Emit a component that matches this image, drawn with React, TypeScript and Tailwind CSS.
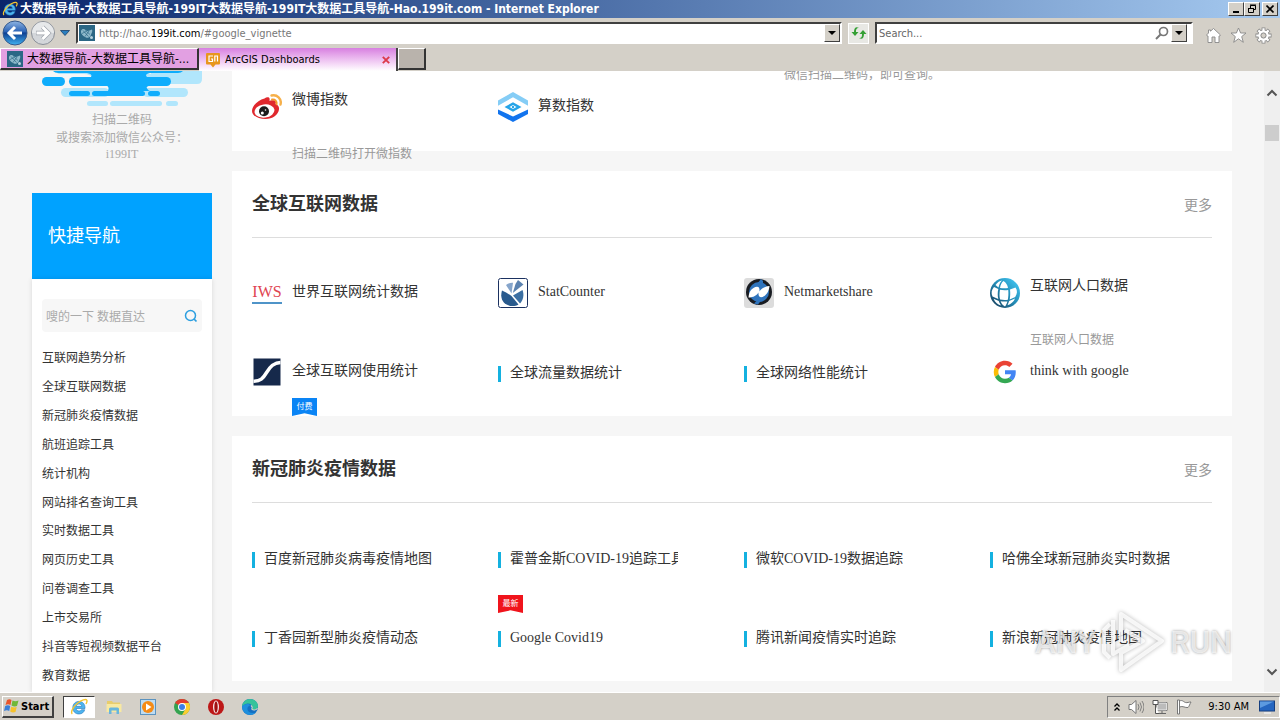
import type { ReactNode } from "react";

type Tag = { text: string; tone: "blue" | "red" };
type Item = { title?: string; icon?: ReactNode; sub?: string; tag?: Tag; high?: boolean };

const ui = "font-['DejaVu_Sans_Condensed','Noto_Sans_CJK_SC',sans-serif]";
const raised = "border border-t-white border-l-white border-r-[#404040] border-b-[#404040] bg-[#d4d0c8]";
const sunken = "border border-t-[#404040] border-l-[#404040] border-r-white border-b-white";

function IeLogo({ className }: { className: string }) {
  return (
    <svg viewBox="0 0 18 18" className={className} aria-hidden="true">
      <path d="M15 10.500H6.200c.1 1.600 1.200 2.500 2.800 2.500 1.200 0 2-.5 2.400-1.300h3.300C14 14.300 12 16 9 16c-3.700 0-6.200-2.500-6.200-6.300S5.400 3.400 9 3.400s6.300 2.600 6 7.100zM6.300 8.300h5.400C11.500 6.900 10.500 6 9 6S6.500 6.900 6.300 8.300z" fill="#4db4ee" stroke="#2277bd" strokeWidth=".6" />
      <path d="M2.300 15.800C.3 14.500 3 8.800 7.500 5.200 11.500 2 16 .6 16.800 2.200c.5.900.1 2.200-.8 3.800" fill="none" stroke="#f4c430" strokeWidth="1.400" />
    </svg>
  );
}

function SiteIcon() {
  return (
    <svg viewBox="0 0 16 16" className="size-4 shrink-0" aria-hidden="true">
      <rect width="16" height="16" fill="#2b6785" />
      <path d="M2 6c1-2.500 3-2.500 4.500-1S10 6 13 4.500c.8 2-.2 3-.7 4.500-.8 3-2.800 4.500-5.300 3.500S1.500 9 2 6z" fill="#8fbacb" />
      <path d="M4 5.500l5.500 6M6.500 5.500l4.500 4M10 6l-4 5.500M3 8.500l4-2" stroke="#2b6785" strokeWidth=".7" />
      <circle cx="12.500" cy="12.500" r="1.500" fill="#b7d3de" />
    </svg>
  );
}

function WeiboIcon() {
  return (
    <svg viewBox="0 0 30 30" className="size-[30px]" aria-hidden="true">
      <path d="M12.500 6.500c2-1.600 4.800-1.500 5.100.2.200.8-.2 2.200-.2 2.200s5.600-1.800 6.400.8c.3 1-.3 2.300-.3 2.300 2.500.8 3.800 2.600 3.500 5.200-.5 5.500-6.500 9.800-13.500 9.800S0 24 0 19C0 14 6 8 12.500 6.500z" fill="#e0282d" />
      <ellipse cx="12.500" cy="19" rx="10" ry="6.600" fill="#fff" transform="rotate(-8 12.500 19)" />
      <circle cx="12" cy="19.300" r="5" fill="#1c1c1c" />
      <circle cx="10.300" cy="21" r="1.500" fill="#fff" />
      <circle cx="13.500" cy="18" r=".8" fill="#fff" />
      <path d="M20 7.500c3-.6 5.300 1.800 4.600 4.800" fill="none" stroke="#f39a2b" strokeWidth="1.900" strokeLinecap="round" />
      <path d="M19.500 3.500C25 2 30 6.800 28.500 12.500" fill="none" stroke="#f6b04a" strokeWidth="2.400" strokeLinecap="round" />
    </svg>
  );
}

function CountIcon() {
  return (
    <svg viewBox="0 0 30 30" className="size-[30px]" aria-hidden="true">
      <path d="M0 8.500L15 0l15 8.500v5.200L15 5.200 0 13.700z" fill="#85cdf6" />
      <path d="M0 17.500l15 7 15-7v4.500l-15 8-15-8z" fill="#1274ee" />
      <path d="M6.500 15L15 10.300l8.500 4.700-8.500 4.700z" fill="#25a4e8" />
      <path d="M11.500 15l3.500-2 3.500 2-3.500 2z" fill="#fff" />
      <circle cx="15" cy="15" r="1.200" fill="#25a4e8" />
    </svg>
  );
}

function IwsIcon() {
  return (
    <span className="flex size-[30px] flex-col items-center justify-center font-['Liberation_Serif',serif] text-base leading-5 text-[#df4450]">
      <span className="border-b-2 border-[#4f94c8]">IWS</span>
    </span>
  );
}

function StatIcon() {
  return (
    <svg viewBox="0 0 30 30" className="size-[30px]" aria-hidden="true">
      <rect x=".5" y=".5" width="29" height="29" rx="2" fill="#fff" stroke="#1b3160" />
      <path d="M4 12.500Q9 14.500 13.500 18l7 8.500C13 31 0 25.500 4 12.500z" fill="#295a8d" />
      <path d="M15 17.500l9.500-5.500c2 5.500.5 10-2.500 13.500z" fill="#3b6fa3" />
      <path d="M13.500 15.500L8 7c2-1.800 4.500-2.500 7-2.300z" fill="#86a5cb" />
      <path d="M14.800 15l2.700-9 2.500-4 5.500 4.500z" fill="#5b82b0" />
    </svg>
  );
}

function NetIcon() {
  return (
    <svg viewBox="0 0 30 30" className="size-[30px]" aria-hidden="true">
      <rect width="30" height="30" rx="3" fill="#dcdcdc" />
      <circle cx="15" cy="14" r="13" fill="#191c22" />
      <circle cx="15" cy="14" r="10" fill="#2f74bd" />
      <path d="M17 1l2 2v3h-6zM10 25.500l3-3h4l-3 4z" fill="#2f74bd" />
      <path d="M4.500 19.500C5 13 8.500 9.300 13 8.800c2.300 0 2.600 2 2.600 4.700 1.400-2.700 5-5 9.900-5.500-.5 6-4 10.700-8.500 11.200-2.300 0-2.600-2-2.600-4.700-1.400 2.700-5 5-9.900 5z" fill="#fff" />
    </svg>
  );
}

function GlobeIcon() {
  return (
    <svg viewBox="0 0 30 30" className="size-[30px]" aria-hidden="true">
      <defs>
        <linearGradient id="globe" x1="1" y1="0" x2="0" y2="1">
          <stop offset="0" stopColor="#47d1ff" />
          <stop offset=".5" stopColor="#238bb5" />
          <stop offset="1" stopColor="#17334e" />
        </linearGradient>
      </defs>
      <circle cx="15" cy="15" r="15" fill="url(#globe)" />
      <g fill="#fff">
        <path d="M5.500 7C7 4.700 9.500 3 12 2.500 10 4.500 9 7 8.500 9.500zM13.500 3c2.500 1.500 4 4 4.500 7-2.600.5-5.500.4-8 0 .5-3 1.500-5.500 3.500-7z" />
        <path d="M4 9l4.300 2c-.8 3.500-.7 7 0 10L2.500 18.500C.9 15 1.500 12 4 9zM10 11.800c2.500.5 5.600.5 8.200.2.400 3.500.2 6.500-.3 9.800-2.700.4-5.300.3-7.800-.2-.8-3.200-.7-6.500-.1-9.800zM20 11.600l5.500-2.200c2.200 3 1.800 6.300-.3 9.500l-5.500 2.500c.6-3.400.7-6.500.3-9.800z" />
        <path d="M3.500 20.800l5.300 2.200c.5 1.500 1.200 3.200 2.500 4.500C8 27 5 24.500 3.500 20.800zM10.600 23.300c2.300.4 4.600.4 6.800.1-.6 2.100-1.300 3.800-2.400 5-2-.8-3.500-2.700-4.400-5.100zM19.200 23l5.800-2.500c-1 3-4 5.700-7.500 6.700z" />
      </g>
    </svg>
  );
}

function SIcon() {
  return (
    <svg viewBox="0 0 30 30" className="size-[30px]" aria-hidden="true">
      <rect x="1.500" y="1.500" width="27" height="27" fill="#16294b" />
      <path d="M1.500 24.200c7-.2 9.500-2.500 13-8.500s7-10 14-10.200" fill="none" stroke="#fff" strokeWidth="3.600" />
    </svg>
  );
}

function GoogleIcon() {
  return (
    <svg viewBox="-8 -8 64 64" className="size-[30px]" aria-hidden="true">
      <path fill="#EA4335" d="M24 9.500c3.540 0 6.710 1.220 9.210 3.600l6.850-6.850C35.900 2.380 30.470 0 24 0 14.620 0 6.510 5.380 2.560 13.220l7.980 6.190C12.430 13.720 17.740 9.500 24 9.500z" />
      <path fill="#4285F4" d="M46.980 24.550c0-1.570-.15-3.090-.38-4.550H24v9.020h12.940c-.58 2.960-2.260 5.480-4.780 7.180l7.730 6c4.510-4.180 7.090-10.360 7.090-17.650z" />
      <path fill="#FBBC05" d="M10.530 28.590c-.48-1.450-.76-2.990-.76-4.590s.27-3.140.76-4.590l-7.980-6.190C.92 16.460 0 20.120 0 24c0 3.880.92 7.540 2.560 10.780l7.970-6.190z" />
      <path fill="#34A853" d="M24 48c6.480 0 11.930-2.130 15.890-5.810l-7.730-6c-2.150 1.450-4.920 2.300-8.160 2.300-6.260 0-11.570-4.220-13.470-9.910l-7.980 6.190C6.510 42.620 14.620 48 24 48z" />
    </svg>
  );
}

function Ribbon({ tag }: { tag: Tag }) {
  return (
    <span
      className={`flex h-[18px] w-[25px] justify-center pt-1 text-[8px] leading-[9px] text-white [clip-path:polygon(0_0,100%_0,100%_100%,50%_85%,0_100%)] ${
        tag.tone === "blue" ? "bg-[#0a84f5]" : "bg-[#f0141c]"
      }`}
    >
      {tag.text}
    </span>
  );
}

function Cell({ item }: { item: Item }) {
  if (!item.icon && item.title) {
    return (
      <li className="flex h-[79px] flex-col pt-[26px]">
        <a href="#" className="flex h-5 w-[180px] shrink-0 items-center gap-[9px] overflow-hidden whitespace-nowrap">
          <span className="mt-0.5 h-4 w-[3px] shrink-0 bg-[#14b1e0]" />
          <span className="leading-5">{item.title}</span>
        </a>
        {item.tag && <div className="mt-[26px]"><Ribbon tag={item.tag} /></div>}
      </li>
    );
  }
  return (
    <li className="flex h-[79px] gap-2.5 pt-5">
      <span className="size-[30px] shrink-0">{item.icon}</span>
      <div className={item.high ? "-mt-0.5" : "mt-1"}>
        <a href="#" className="block h-5 whitespace-nowrap leading-5">{item.title}</a>
        {item.sub && <p className="mt-9 whitespace-nowrap text-xs leading-4 text-[#999]">{item.sub}</p>}
        {item.tag && <div className="mt-[17px]"><Ribbon tag={item.tag} /></div>}
      </div>
    </li>
  );
}

function Card({ heading, items }: { heading?: string; items: Item[] }) {
  return (
    <section className="bg-white px-5">
      {heading && (
        <header className="mb-5 flex h-[67px] items-center justify-between border-b border-[#ddd]">
          <h2 className="text-lg font-bold">{heading}</h2>
          <a href="#" className="pt-1 text-sm text-[#999]">更多</a>
        </header>
      )}
      <ul className="grid grid-cols-4 gap-x-6">
        {items.map((item, i) => <Cell key={i} item={item} />)}
      </ul>
    </section>
  );
}

const indexItems: Item[] = [
  {},
  {},
  { sub: "微信扫描二维码，即可查询。", high: true },
  {},
  { title: "微博指数", icon: <WeiboIcon />, sub: "扫描二维码打开微指数", high: true },
  { title: "算数指数", icon: <CountIcon /> },
];

const globalItems: Item[] = [
  { title: "世界互联网统计数据", icon: <IwsIcon /> },
  { title: "StatCounter", icon: <StatIcon /> },
  { title: "Netmarketshare", icon: <NetIcon /> },
  { title: "互联网人口数据", icon: <GlobeIcon />, sub: "互联网人口数据", high: true },
  { title: "全球互联网使用统计", icon: <SIcon />, tag: { text: "付费", tone: "blue" } },
  { title: "全球流量数据统计" },
  { title: "全球网络性能统计" },
  { title: "think with google", icon: <GoogleIcon /> },
];

const covidItems: Item[] = [
  { title: "百度新冠肺炎病毒疫情地图" },
  { title: "霍普金斯COVID-19追踪工具", tag: { text: "最新", tone: "red" } },
  { title: "微软COVID-19数据追踪" },
  { title: "哈佛全球新冠肺炎实时数据" },
  { title: "丁香园新型肺炎疫情动态" },
  { title: "Google Covid19" },
  { title: "腾讯新闻疫情实时追踪" },
  { title: "新浪新冠肺炎疫情地图" },
];

const quickLinks = [
  "互联网趋势分析", "全球互联网数据", "新冠肺炎疫情数据", "航班追踪工具", "统计机构", "网站排名查询工具",
  "实时数据工具", "网页历史工具", "问卷调查工具", "上市交易所", "抖音等短视频数据平台", "教育数据",
];

function DownArrow() {
  return (
    <svg viewBox="0 0 8 4" className="h-1 w-2" aria-hidden="true"><path d="M0 0h8L4 4z" fill="#000" /></svg>
  );
}

function BrowserBar() {
  return (
    <div className={`bg-[#d4d0c8] ${ui}`}>
      <div className="flex h-[18px] items-center bg-linear-to-r from-[#0a246a] to-[#a6caf0] pl-0.5 pr-0.5">
        <IeLogo className="size-4 shrink-0" />
        <h1 className="ml-0.5 flex-1 truncate text-[12px] font-bold leading-[18px] text-white">
          大数据导航-大数据工具导航-199IT大数据导航-199IT大数据工具导航-Hao.199it.com - Internet Explorer
        </h1>
        <button aria-label="Minimize" className={`flex h-[14px] w-4 items-end p-0.5 ${raised}`}>
          <span className="ml-0.5 h-0.5 w-1.5 bg-black" />
        </button>
        <button aria-label="Restore" className={`flex h-[14px] w-4 items-center justify-center ${raised}`}>
          <svg viewBox="0 0 10 10" className="size-2.5"><path d="M3.500 4V1.500h5v4H7M1.500 4.500h5v4h-5zM3 1h6M1 4.500h6" fill="none" stroke="#000" /></svg>
        </button>
        <button aria-label="Close" className={`ml-0.5 flex h-[14px] w-4 items-center justify-center ${raised}`}>
          <svg viewBox="0 0 8 8" className="size-2"><path d="M.5.5l7 7M7.500.5l-7 7" stroke="#000" strokeWidth="1.600" /></svg>
        </button>
      </div>

      <div className="flex h-[30px] items-center">
        <button aria-label="Back" className="ml-0.5">
          <svg viewBox="0 0 26 26" className="size-[26px]">
            <defs>
              <linearGradient id="back" x1="0" y1="0" x2="0" y2="1">
                <stop offset="0" stopColor="#8fb5e3" /><stop offset=".45" stopColor="#2a62b5" /><stop offset=".5" stopColor="#0e3f91" /><stop offset="1" stopColor="#41b3f2" />
              </linearGradient>
            </defs>
            <circle cx="13" cy="13" r="12" fill="url(#back)" stroke="#35598c" />
            <path d="M20 13H7.500M13 7l-6 6 6 6" fill="none" stroke="#fff" strokeWidth="3" />
          </svg>
        </button>
        <button aria-label="Forward" className="ml-0.5">
          <svg viewBox="0 0 26 26" className="size-[26px]">
            <circle cx="13" cy="13" r="11.500" fill="#d3d6da" stroke="#8a8f98" />
            <path d="M2 13a11 11 0 0 1 22 0z" fill="#e6e8ea" />
            <path d="M6 13h12M12.500 7l6 6-6 6" fill="none" stroke="#9ea3ab" strokeWidth="4.400" />
            <path d="M6.500 13h12M12.500 7l6 6-6 6" fill="none" stroke="#fff" strokeWidth="3" />
          </svg>
        </button>
        <button aria-label="Recent pages" className="ml-1">
          <svg viewBox="0 0 10 6" className="h-1.5 w-2.5"><path d="M.5.5h9L5 5.500z" fill="#2b7fc0" stroke="#173f6b" strokeWidth=".8" /></svg>
        </button>
        <div className={`ml-1.5 flex h-[22px] flex-1 items-center border-2 bg-white pl-px ${sunken}`}>
          <SiteIcon />
          <label htmlFor="address" className="sr-only">Address</label>
          <div id="address" role="textbox" contentEditable suppressContentEditableWarning className="ml-1 flex-1 pt-0.5 text-[11px] leading-4 text-[#777] outline-none">
            http://hao.<span className="text-black">199it.com</span>/#google_vignette
          </div>
          <button aria-label="Show addresses" className={`flex h-[18px] w-4 items-center justify-center ${raised}`}><DownArrow /></button>
        </div>
        <button aria-label="Refresh" className="ml-1.5 flex size-[21px] items-center justify-center border border-white bg-[#e8e8e4]">
          <svg viewBox="0 0 16 16" className="size-4">
            <path d="M8 3C6 2.500 5 4 5 6V7h2.500L4 11 .5 7H3c0-4 2-6 5-4zM8 13c2 .5 3-1 3-3V9H8.500L12 5l3.500 4H13c0 4-2 6-5 4z" fill="#35a035" />
          </svg>
        </button>
        <div className={`ml-1.5 flex h-[22px] w-[318px] items-center border-2 bg-white ${sunken}`}>
          <input aria-label="Search" placeholder="Search..." className="w-0 flex-1 pl-0.5 pt-0.5 text-[11px] leading-4 outline-none placeholder:text-[#666]" />
          <svg viewBox="0 0 14 14" className="mr-0.5 size-3.5" aria-hidden="true"><circle cx="8.500" cy="5.500" r="4" fill="none" stroke="#777" strokeWidth="1.700" /><path d="M5.500 8.500L1 13" stroke="#777" strokeWidth="2" /></svg>
          <button aria-label="Search providers" className={`mr-1 flex h-[18px] w-4 items-center justify-center ${raised}`}><DownArrow /></button>
        </div>
        <div className="ml-3 mr-2 flex items-center gap-2 pt-1">
          <button aria-label="Home"><svg viewBox="0 0 17 17" className="size-[17px]"><path d="M8.500 1.500l7 6.500-1 1H14v6.500h-4V10H7v5.500H3V9h-.5l-1-1 2-2V3h2v1.200z" fill="#fff" stroke="#888" strokeWidth=".9" /></svg></button>
          <button aria-label="Favorites"><svg viewBox="0 0 17 17" className="size-[17px]"><path d="M8.500 1l2.100 5h5.400l-4.300 3.600 1.600 5.700-4.800-3.500-4.800 3.500 1.600-5.700L1 6h5.400z" fill="#fff" stroke="#888" strokeWidth=".9" /></svg></button>
          <button aria-label="Tools">
            <svg viewBox="-8.500 -8.500 17 17" className="size-[17px]">
              <g stroke="#888" strokeWidth="3.800"><path d="M0-8V8M-8 0H8M-5.600-5.600L5.600 5.600M5.600-5.600L-5.600 5.600" /></g>
              <circle r="6" fill="#888" />
              <g stroke="#fff" strokeWidth="2.200"><path d="M0-7.300V7.300M-7.300 0H7.300M-5.100-5.100L5.100 5.100M5.100-5.100L-5.100 5.100" /></g>
              <circle r="5.200" fill="#fff" />
              <circle r="2.600" fill="#d4d0c8" stroke="#888" strokeWidth="1" />
            </svg>
          </button>
        </div>
      </div>

      <div className="flex h-[23px] items-start text-[11px]" role="tablist">
        <button role="tab" aria-selected="false" className="flex h-[22px] w-[199px] items-center gap-1 border-t border-l border-r-2 border-b-2 border-t-white border-l-white border-r-[#333] border-b-[#333] bg-[#e2a0e2] px-1.5">
          <SiteIcon />
          <span className="whitespace-nowrap text-xs leading-[18px]">大数据导航-大数据工具导航-...</span>
        </button>
        <div className="flex h-[23px] w-[199px] items-center border-r-2 border-[#444] bg-linear-to-b from-[#d77fe0] to-white pl-1.5">
          <button role="tab" aria-selected="true" className="flex flex-1 items-center gap-1 text-left">
            <svg viewBox="0 0 16 16" className="size-4" aria-hidden="true">
              <path d="M2 1h12q1 0 1 1v9.500q0 1-1 1h-3.500L8 15.500 5.500 12.500H2q-1 0-1-1V2q0-1 1-1z" fill="#e8961e" />
              <path d="M8 4H4v5.500h3.500V7H6M9.800 9.500V4H12.500v5.500" fill="none" stroke="#fff" strokeWidth="1.200" />
            </svg>
            <span className="pt-0.5">ArcGIS Dashboards</span>
          </button>
          <button aria-label="Close tab" className="mr-1.5">
            <svg viewBox="0 0 8 8" className="size-2"><path d="M.8.8l6.400 6.400M7.200.8L.8 7.200" stroke="#dc3a4a" strokeWidth="1.900" /></svg>
          </button>
        </div>
        <button aria-label="New tab" className="h-[22px] w-7 border-t border-l border-r-2 border-b-2 border-t-white border-l-white border-r-[#333] border-b-[#333] bg-[#b9b3ac]" />
      </div>
    </div>
  );
}

function Sidebar() {
  return (
    <aside className="flex w-[180px] shrink-0 flex-col">
      <div className="flex h-[122px] shrink-0 flex-col items-center text-xs text-[#aaa]">
        <svg viewBox="0 0 162 36" className="h-9 w-[162px] shrink-0" aria-hidden="true">
          <g fill="#b1e6fc">
            <path d="M16 2h74v5H52q-3-4-9-4H18zM105 3h5q-2-3 8-3h43v8q0 5-5 5h-38q-8 0-13-2z" />
            <rect x="20" y="17" width="48" height="9" rx="4.500" /><rect x="102" y="17" width="45" height="9" rx="4.500" />
            <rect x="46" y="30" width="21" height="5" rx="2.500" /><rect x="69" y="30" width="52" height="5" rx="2.500" /><rect x="125" y="30" width="12" height="5" rx="2.500" />
          </g>
          <g fill="#0fadfc">
            <path d="M12 0h130q-2 2-5 2h-28q-6 1-3 4H50q2-3-4-4H17q-3 0-5-2zM64 14h48q-8 1-6 3.500t3 2.500H67q2-5-3-6z" />
            <rect x="1" y="6" width="23" height="9" rx="4.500" /><rect x="28" y="6" width="102" height="9" rx="4.500" />
            <rect x="28" y="20" width="21" height="5" rx="2.500" /><rect x="51" y="20" width="53" height="5" rx="2.500" /><rect x="107" y="20" width="12" height="5" rx="2.500" />
          </g>
        </svg>
        <p className="mt-1 text-center leading-[18px]">扫描二维码<br />或搜索添加微信公众号：</p>
        <p className="leading-[14px]">i199IT</p>
      </div>
      <h2 className="flex h-[86px] shrink-0 items-center bg-[#00a2ff] px-4 text-lg text-white">快捷导航</h2>
      <nav className="flex-1 bg-white px-2.5 pt-5 shadow-[0_0_5px_rgba(0,0,0,0.12)]">
        <label className="flex h-[33px] items-center rounded bg-[#f7f7f7] px-1">
          <span className="sr-only">搜索</span>
          <input placeholder="嗖的一下 数据直达" className="w-0 flex-1 bg-transparent pt-0.5 text-xs leading-5 outline-none placeholder:text-[#aaa]" />
          <svg viewBox="0 0 14 14" className="size-3.5" aria-hidden="true"><circle cx="6.500" cy="6.500" r="5" fill="none" stroke="#2d9fe0" strokeWidth="1.500" /><path d="M10 10l2.500 2.500" stroke="#2d9fe0" strokeWidth="1.700" /></svg>
        </label>
        <ul className="mt-3 grid h-[346px] auto-rows-fr text-xs">
          {quickLinks.map((t) => (
            <li key={t} className="flex items-center"><a href="#">{t}</a></li>
          ))}
        </ul>
      </nav>
    </aside>
  );
}

function Watermark() {
  return (
    <div className="pointer-events-none absolute bottom-[18px] right-12 flex items-center gap-1 font-[Roboto,sans-serif] text-[31px] font-medium leading-none text-white/70 [text-shadow:0_0_3px_rgba(0,0,0,0.4)]">
      <span>ANY</span>
      <svg viewBox="0 0 66 64" className="h-16 w-[66px] [filter:drop-shadow(0_0_2px_rgba(0,0,0,0.35))]" aria-hidden="true">
        <path d="M21 32V4l41 27-41 29V43l22-12-18-11M13 10v34l16-9M10 14l-6 6v22l6 6" fill="none" stroke="#fff" strokeOpacity=".8" strokeWidth="4" strokeLinejoin="round" />
      </svg>
      <span>RUN</span>
    </div>
  );
}

function Scrollbar() {
  return (
    <div className="flex w-4 shrink-0 flex-col items-center bg-[#efefef] py-4" aria-hidden="true">
      <svg viewBox="0 0 12 8" className="mt-0.5 h-2 w-3"><path d="M1.500 6.500L6 2l4.500 4.500" fill="none" stroke="#555" strokeWidth="2" /></svg>
      <div className="mt-7 h-4 w-3.5 bg-[#cdcdcd]" />
      <svg viewBox="0 0 12 8" className="mt-auto h-2 w-3"><path d="M1.500 1.500L6 6l4.500-4.500" fill="none" stroke="#555" strokeWidth="2" /></svg>
    </div>
  );
}

function Taskbar() {
  return (
    <footer className={`flex h-7 shrink-0 items-center border-t border-white bg-[#d4d0c8] ring-1 ring-[#d4d0c8] ${ui}`}>
      <button className={`ml-0.5 flex h-[22px] w-[52px] items-center gap-px border-r-2 border-b-2 px-px text-[11px] font-bold ${raised}`}>
        <svg viewBox="0 0 16 16" className="size-4 shrink-0" aria-hidden="true">
          <path d="M3 2q2.500-1.500 4.500 0L6.500 7Q4 5.500 1.500 7z" fill="#e8552c" />
          <path d="M8.500 2.500q3 1.500 6 0L13 8q-2.500 1-5.500-.5z" fill="#70b838" />
          <path d="M1.200 8Q4 6.500 6.200 8l-1 5Q3 11.500 0 13z" fill="#3a7fd8" />
          <path d="M7.200 8.700q3 1.300 5.500.3l-1.200 5q-2.800 1.200-5.300-.5z" fill="#f5c22c" />
        </svg>
        <span className="pt-0.5">Start</span>
      </button>
      <div className="ml-[9px] flex items-center gap-4">
        <button aria-label="Internet Explorer" className={`-mr-1.5 flex h-[22px] w-8 items-center justify-center bg-white ${sunken}`}><IeLogo className="size-[18px]" /></button>
        <button aria-label="Explorer">
          <svg viewBox="0 0 18 18" className="size-[18px]">
            <path d="M2 3h5l1 1.500h7V14H2z" fill="#e8cd6c" /><path d="M1.500 6h15v8h-15z" fill="#f8e9a1" /><path d="M4 16v-5q0-1.500 1.500-1.500h7Q14 9.500 14 11v5h-2.500v-3.500h-5V16z" fill="#68b6dc" />
          </svg>
        </button>
        <button aria-label="Media Player">
          <svg viewBox="0 0 18 18" className="size-[18px]">
            <rect x="1.500" y="1.500" width="15" height="15" fill="#bedcf2" stroke="#5b93bf" /><circle cx="9" cy="9" r="6" fill="#f58b16" /><path d="M7 5.500v7L12.500 9z" fill="#fff" />
          </svg>
        </button>
        <button aria-label="Chrome">
          <svg viewBox="0 0 18 18" className="size-[18px]">
            <circle cx="9" cy="9" r="8" fill="#34a350" /><path d="M9 9L2.070 5A8 8 0 0 1 15.930 5z" fill="#e33b2e" /><path d="M9 5h6.930A8 8 0 0 1 9 17l3.500-6z" fill="#fccd2f" /><circle cx="9" cy="9" r="4" fill="#fff" /><circle cx="9" cy="9" r="3" fill="#3c7ee8" />
          </svg>
        </button>
        <button aria-label="Opera">
          <svg viewBox="0 0 18 18" className="size-[18px]"><circle cx="9" cy="9" r="8" fill="#bd1717" /><ellipse cx="9" cy="9" rx="3" ry="6.500" fill="#f7e6e6" /><ellipse cx="9" cy="9" rx="1.700" ry="5.800" fill="#a01010" /></svg>
        </button>
        <button aria-label="Edge">
          <svg viewBox="0 0 18 18" className="size-[18px]">
            <circle cx="9" cy="9" r="8" fill="#1570c2" /><path d="M1 8.500C1.500 4 5 1 9 1c5 0 8 3.500 8 7 0 2.500-2 4-4 4s-2.500-1-2-1.800C12.500 7 8 4 4 6.200 2.500 7 1.500 8 1 8.500z" fill="#35c39b" /><path d="M1 8.500C3 5.500 8 5 10 7.500c-2-.5-4 1.500-3.500 4 .5 3 4 4.500 8.500 3-5 5-14 1.500-14-6z" fill="#1e8fdd" /><path d="M10 7.500c1 1 1.500 2 1 2.700-.5.800 0 1.800 2 1.800 1.500 0 2.800-.7 3.500-1.800" fill="none" stroke="#d4d0c8" strokeWidth="1.100" />
          </svg>
        </button>
      </div>
      <div className="ml-auto flex h-[22px] items-center gap-2 border border-t-[#808080] border-l-[#808080] border-r-white border-b-white pl-1.5 pr-1 text-[11px]">
        <svg viewBox="0 0 6 9" className="h-2.5 w-1.5" aria-hidden="true"><path d="M.5 4L3 1.500 5.500 4M.5 8L3 5.500 5.500 8" fill="none" stroke="#000" strokeWidth="1.300" /></svg>
        <svg viewBox="0 0 16 16" className="size-4" aria-hidden="true"><path d="M1 5.500h2.500L8 1.500v13l-4.500-4H1z" fill="#fff" stroke="#777" /><path d="M10 5q2 3 0 6M12 3.500q3 4.500 0 9M14 2q4 6 0 12" fill="none" stroke="#777" strokeWidth=".9" /></svg>
        <svg viewBox="0 0 16 16" className="size-4" aria-hidden="true"><path d="M5 3.500h10v8H5zM7 14.500h7M10 11.500v3" fill="#bbb" stroke="#666" /><path d="M5.500 4h9v7h-9z" fill="none" stroke="#fff" strokeWidth=".7" /><path d="M1 1.500h5v4H1zM3.500 6v8.500H7" fill="#fff" stroke="#555" /></svg>
        <svg viewBox="0 0 16 16" className="size-4" aria-hidden="true"><path d="M1.500 1h2v14h-2zM3.500 2c3-1.500 4 1 6 1.500s3-.5 5.500-.5c-1.500 2.500-1.500 4-3 5.500-3 .5-5-2-8.500-.5z" fill="#fff" stroke="#777" /></svg>
        <time className="ml-2 mr-0.5 pt-0.5">9:30 AM</time>
        <svg viewBox="0 0 16 14" className="h-3.5 w-4" aria-hidden="true"><rect x=".5" y="1" width="15" height="10" fill="#2566c0" stroke="#163f80" /><path d="M1 1.500h14L1 8z" fill="#5c9ae0" /><path d="M5 13h7" stroke="#eee" strokeWidth="1.500" /></svg>
      </div>
    </footer>
  );
}

export default function App() {
  return (
    <div className="flex h-screen flex-col overflow-hidden">
      <BrowserBar />
      <div className="relative flex min-h-0 flex-1 overflow-hidden bg-[#f6f6f6] font-['Liberation_Serif','Noto_Sans_CJK_SC',serif] text-sm text-[#333]">
        <div className="flex min-w-0 flex-1 gap-5 overflow-hidden px-8">
          <Sidebar />
          <main className="-mt-[78px] flex min-w-0 flex-1 flex-col gap-5">
            <Card items={indexItems} />
            <Card heading="全球互联网数据" items={globalItems} />
            <Card heading="新冠肺炎疫情数据" items={covidItems} />
          </main>
        </div>
        <Scrollbar />
        <Watermark />
      </div>
      <Taskbar />
    </div>
  );
}
